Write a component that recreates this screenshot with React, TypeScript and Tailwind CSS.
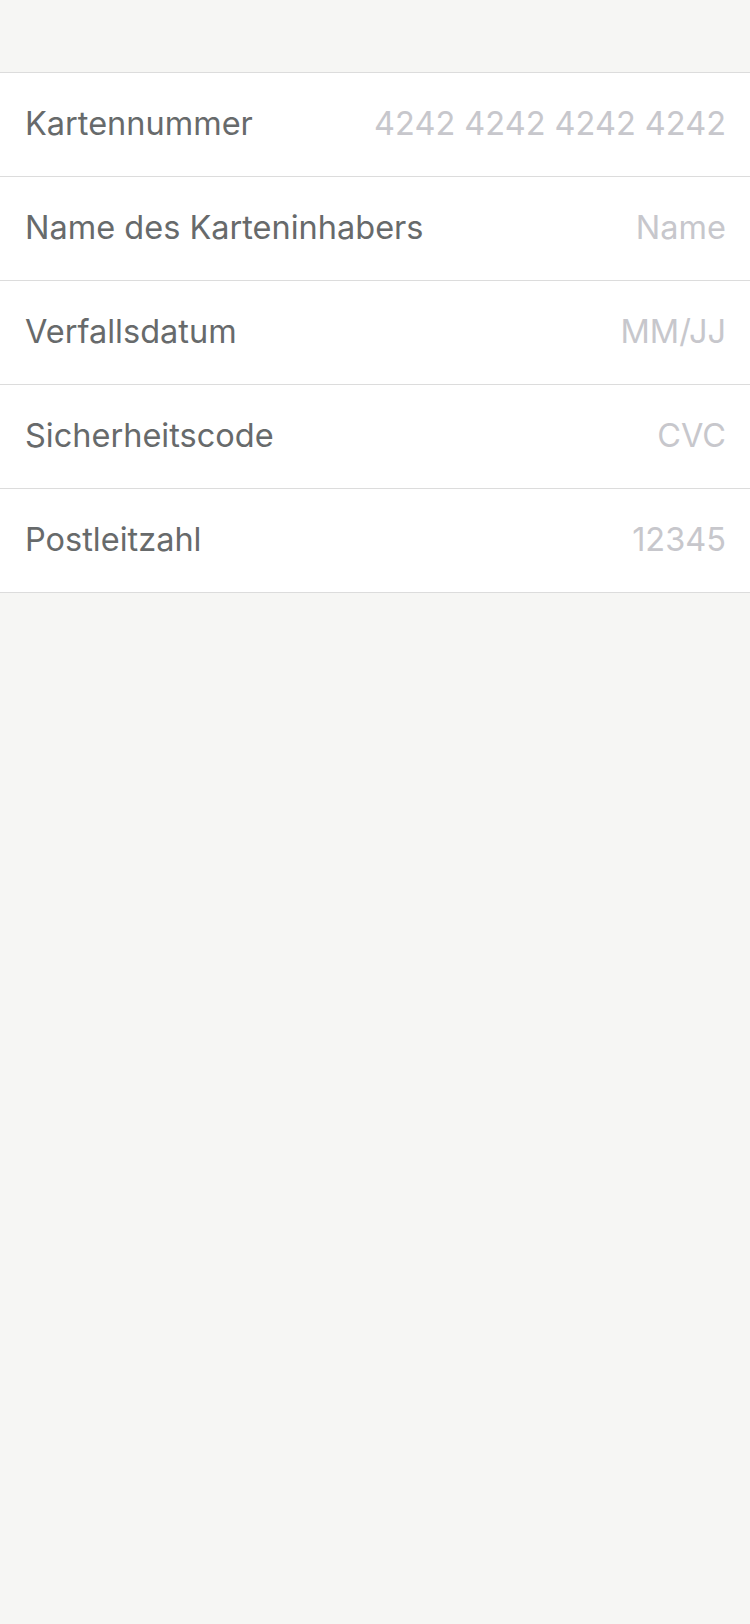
import React from "react";

const rows = [
  { label: "Kartennummer", ph: "4242 4242 4242 4242" },
  { label: "Name des Karteninhabers", ph: "Name" },
  { label: "Verfallsdatum", ph: "MM/JJ" },
  { label: "Sicherheitscode", ph: "CVC" },
  { label: "Postleitzahl", ph: "12345" },
];

export default function App() {
  return (
    <div
      className="w-[750px] h-[1624px] bg-[#f6f6f4] pt-[72px]"
      style={{ fontFamily: "Inter, 'Noto Sans', sans-serif" }}
    >
      <div className="bg-white border-t border-[#dcdcdc]">
        {rows.map((r) => (
          <div
            key={r.label}
            className="flex items-center justify-between h-[104px] pl-[25px] pr-[24px] text-[32.5px] border-b border-[#dcdcdc]"
          >
            <span className="text-[#676a6b]">{r.label}</span>
            <span className="text-[#c7c7cc]">{r.ph}</span>
          </div>
        ))}
      </div>
    </div>
  );
}
